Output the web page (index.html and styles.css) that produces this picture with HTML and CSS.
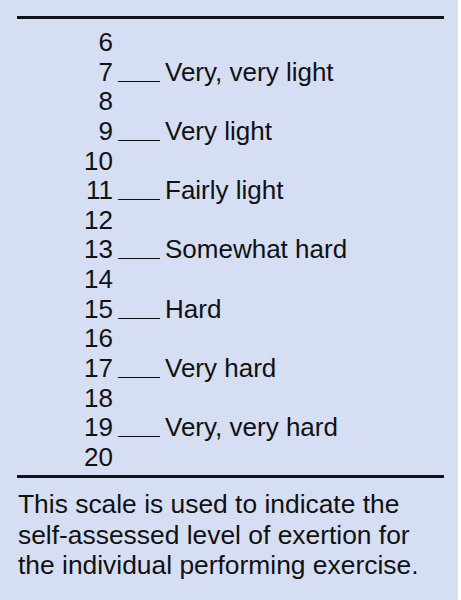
FILE: index.html
```html
<!DOCTYPE html>
<html>
<head>
<meta charset="utf-8">
<link rel="stylesheet" href="styles.css">
</head>
<body>
<div class="panel">
  <div class="rule"></div>
  <div class="scale">
    <div class="num">6</div><div class="dash empty"></div><div class="label"></div>
    <div class="num">7</div><div class="dash"></div><div class="label">Very, very light</div>
    <div class="num">8</div><div class="dash empty"></div><div class="label"></div>
    <div class="num">9</div><div class="dash"></div><div class="label">Very light</div>
    <div class="num">10</div><div class="dash empty"></div><div class="label"></div>
    <div class="num">11</div><div class="dash"></div><div class="label">Fairly light</div>
    <div class="num">12</div><div class="dash empty"></div><div class="label"></div>
    <div class="num">13</div><div class="dash"></div><div class="label">Somewhat hard</div>
    <div class="num">14</div><div class="dash empty"></div><div class="label"></div>
    <div class="num">15</div><div class="dash"></div><div class="label">Hard</div>
    <div class="num">16</div><div class="dash empty"></div><div class="label"></div>
    <div class="num">17</div><div class="dash"></div><div class="label">Very hard</div>
    <div class="num">18</div><div class="dash empty"></div><div class="label"></div>
    <div class="num">19</div><div class="dash"></div><div class="label">Very, very hard</div>
    <div class="num">20</div><div class="dash empty"></div><div class="label"></div>
  </div>
  <div class="rule rule2"></div>
  <p class="caption">This scale is used to indicate the self-assessed level of exertion for the individual performing exercise.</p>
</div>
</body>
</html>
```
FILE: styles.css
```css
html, body {
  margin: 0;
  padding: 0;
}
body {
  width: 461px;
  height: 600px;
  background: #ffffff;
  font-family: "Liberation Sans", Arial, sans-serif;
  color: #111111;
}
.panel {
  width: 458px;
  height: 600px;
  background: #d6def4;
  padding: 16px 17px 0 17px;
  box-sizing: border-box;
}
.rule {
  height: 3px;
  background: #111318;
  width: 427px;
}
.scale {
  display: grid;
  grid-template-columns: 96px 52px auto;
  grid-auto-rows: 29.64px;
  margin-top: 9px;
  font-size: 26px;
  line-height: 29.64px;
}
.num {
  text-align: right;
}
.dash {
  margin: 0 5px 0 5px;
  border-bottom: 1.5px solid #111;
  height: 23px;
}
.dash.empty {
  border-bottom: none;
}
.label {
  white-space: nowrap;
}
.rule2 {
  margin-top: 3px;
}
.caption {
  margin: 11px 0 0 1px;
  font-size: 26.4px;
  line-height: 30.5px;
}
```
